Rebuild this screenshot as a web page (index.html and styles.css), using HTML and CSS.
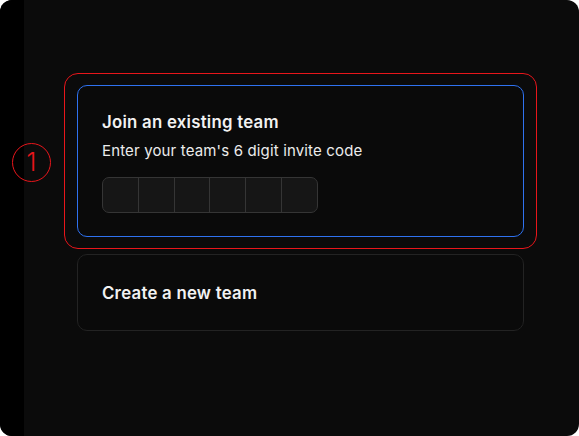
FILE: index.html
```html
<!DOCTYPE html>
<html>
<head>
<meta charset="utf-8">
<link rel="stylesheet" href="styles.css">
</head>
<body>
<div class="window">
  <div class="sidebar"></div>
  <main class="main">
    <div class="card card-active">
      <div class="highlight"></div>
      <h2 class="card-title">Join an existing team</h2>
      <p class="card-sub">Enter your team's 6 digit invite code</p>
      <div class="otp">
        <span class="cell"></span><span class="cell"></span><span class="cell"></span><span class="cell"></span><span class="cell"></span><span class="cell"></span>
      </div>
    </div>
    <div class="card card-plain">
      <h2 class="card-title">Create a new team</h2>
    </div>
  </main>
  <div class="marker">1</div>
</div>
</body>
</html>
```
FILE: styles.css
```css
* { box-sizing: border-box; }
html, body { margin: 0; padding: 0; background: #ffffff; }
body { font-family: Inter, "Noto Sans", "Liberation Sans", sans-serif; }

.window {
  position: relative;
  width: 579px;
  height: 436px;
  border-radius: 12px;
  overflow: hidden;
  display: flex;
  background: #0b0b0b;
}
.sidebar { width: 24px; background: #000000; flex: none; }
.main {
  flex: 1;
  padding: 85px 0 0 53px;
  display: flex;
  flex-direction: column;
  gap: 17px;
}
.card {
  position: relative;
  width: 447px;
  border: 1px solid #232323;
  border-radius: 10px;
  background: #0a0a0a;
}
.card-active {
  border: 1px solid #2f72f0;
  padding: 24px 24px 23px 24px;
}
.card-plain {
  padding: 26px 24px 25px 24px;
}
.highlight {
  position: absolute;
  top: -13px;
  left: -14px;
  right: -14px;
  bottom: -13px;
  border: 1.5px solid #e8161b;
  border-radius: 14px;
  pointer-events: none;
}
.card-title {
  margin: 0;
  font-size: 16.8px;
  letter-spacing: 0.25px;
  line-height: 24px;
  font-weight: 600;
  color: #f2f2f2;
}
.card-sub {
  margin: 6px 0 0 0;
  font-size: 15px;
  letter-spacing: 0.15px;
  line-height: 22px;
  font-weight: 400;
  color: #ececec;
}
.otp {
  margin-top: 15px;
  display: flex;
  width: 216px;
  height: 36px;
  border: 1px solid #353535;
  border-radius: 7px;
  overflow: hidden;
  background: #161616;
}
.cell {
  flex: 1;
  border-right: 1px solid #353535;
}
.cell:last-child { border-right: none; }
.marker {
  position: absolute;
  left: 12px;
  top: 143px;
  width: 39px;
  height: 39px;
  border: 1.5px solid #e8161b;
  border-radius: 50%;
  color: #e8161b;
  font-size: 25px;
  font-weight: 300;
  display: flex;
  align-items: center;
  justify-content: center;
  line-height: 1;
}
```
